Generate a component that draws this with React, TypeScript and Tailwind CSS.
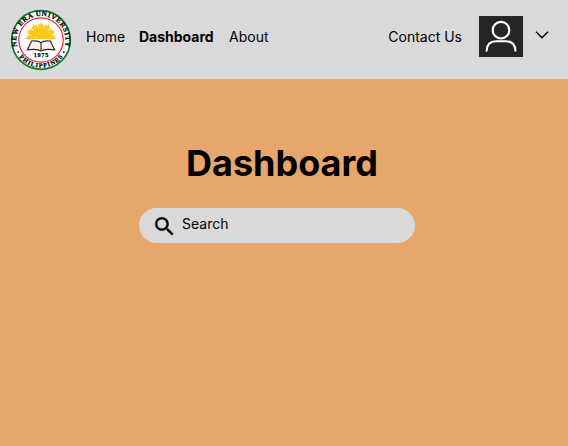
const rays = Array.from({ length: 7 }, (_, i) => 180 + i * 30);

function UniversityLogo() {
  return (
    <svg viewBox="0 0 62 62" className="block h-[62px] w-[62px]" role="img">
      <defs>
        <path id="upperArc" d="M7.7 39.4A24.6 24.6 0 1 1 54.3 39.4" />
        <path id="lowerArc" d="M8.5 47.2A28 28 0 0 0 53.5 47.2" />
      </defs>
      <circle cx="31" cy="31" r="29.3" fill="#fff" stroke="#0c7a24" strokeWidth="1.7" />
      <circle cx="31" cy="31" r="22.2" fill="#fff" stroke="#e02a35" strokeWidth="1.2" />
      <g fill="#fdc81e">
        {rays.map((a) => (
          <path key={a} d="M38 26.6L45.5 26.4L44.4 28.2L48 29.2L44.4 30.2L45.5 32L38 31.8Z" transform={`rotate(${a} 31 29.2)`} />
        ))}
        <path d="M22.3 30A8.7 8.7 0 0 1 39.7 30Z" />
      </g>
      <path d="M16 30.4H46V34H16Z" fill="#fff" />
      <path
        d="M31 33.6C29 31.6 25 31.6 21.6 32L17.4 40.8C22 40.2 28 40 31 42C34 40 40 40.2 44.6 40.8L40.4 32C37 31.6 33 31.6 31 33.6Z"
        fill="#f7efeb"
        stroke="#3a2825"
        strokeWidth="1.2"
      />
      <path d="M31 33.6V42" stroke="#3a2825" strokeWidth="1.1" />
      <g className="font-['Liberation_Serif',serif] font-bold" fill="#000" stroke="#000" strokeWidth="0.25">
        <text fontSize="7">
          <textPath href="#upperArc" startOffset="50%" textAnchor="middle" textLength="89" lengthAdjust="spacing">
            NEW ERA UNIVERSITY
          </textPath>
        </text>
        <text fontSize="6.2">
          <textPath href="#lowerArc" startOffset="50%" textAnchor="middle" textLength="50" lengthAdjust="spacing">
            PHILIPPINES
          </textPath>
        </text>
        <text x="31" y="48.2" fontSize="6.2" textAnchor="middle" textLength="14.5">
          1975
        </text>
      </g>
      <circle cx="8.2" cy="43.2" r="0.9" fill="#111" />
      <circle cx="53.8" cy="43.2" r="0.9" fill="#111" />
    </svg>
  );
}

function Avatar() {
  return (
    <svg viewBox="0 0 44 41" className="block h-[41px] w-11 bg-[#262624]" fill="none" stroke="#fff" strokeWidth="2.1" strokeLinecap="round">
      <circle cx="22" cy="14.2" r="8.3" />
      <path d="M7.6 34.8C7.8 28.8 11.2 25.2 17 25.2H27C32.8 25.2 36.2 28.8 36.4 34.8" />
    </svg>
  );
}

export default function App() {
  return (
    <div className="h-screen w-full overflow-hidden bg-[#e7a66c] font-['Inter',sans-serif] text-sm leading-5 text-black">
      <header className="flex h-[79px] items-start bg-[#d9d9d9] pl-[10px]">
        <div className="mt-[9px]">
          <UniversityLogo />
        </div>
        <nav className="mt-[27px] ml-[14px] flex flex-1">
          <a className="w-[53px]">Home</a>
          <a className="w-[90px] font-bold">Dashboard</a>
          <a>About</a>
          <a className="mr-[17px] ml-auto">Contact Us</a>
        </nav>
        <div className="mt-4">
          <Avatar />
        </div>
        <svg viewBox="0 0 14 8" className="mt-[31px] mr-[19px] ml-3 h-2 w-[14px]" fill="none" stroke="#000" strokeWidth="1.5">
          <path d="M1 0.7L7 6.7L13 0.7" />
        </svg>
      </header>
      <main className="pt-[61px]">
        <h1 className="pl-[186px] text-4xl leading-[46px] font-bold">Dashboard</h1>
        <div className="mt-[22px] ml-[139px] flex h-[35px] w-[276px] rounded-full bg-[#d9d9d9] pl-[13px]">
          <svg viewBox="0 0 24 24" className="mt-[6px] h-[25px] w-[25px]" stroke="#000" strokeWidth="0.3">
            <path d="M15.5 14h-.79l-.28-.27A6.471 6.471 0 0 0 16 9.5 6.5 6.5 0 1 0 9.5 16c1.61 0 3.09-.59 4.23-1.57l.27.28v.79l5 4.99L20.49 19l-4.99-5zm-6 0C7.01 14 5 11.99 5 9.5S7.01 5 9.5 5 14 7.01 14 9.5 11.99 14 9.5 14z" />
          </svg>
          <span className="mt-[6px] ml-[5px]">Search</span>
        </div>
      </main>
    </div>
  );
}
